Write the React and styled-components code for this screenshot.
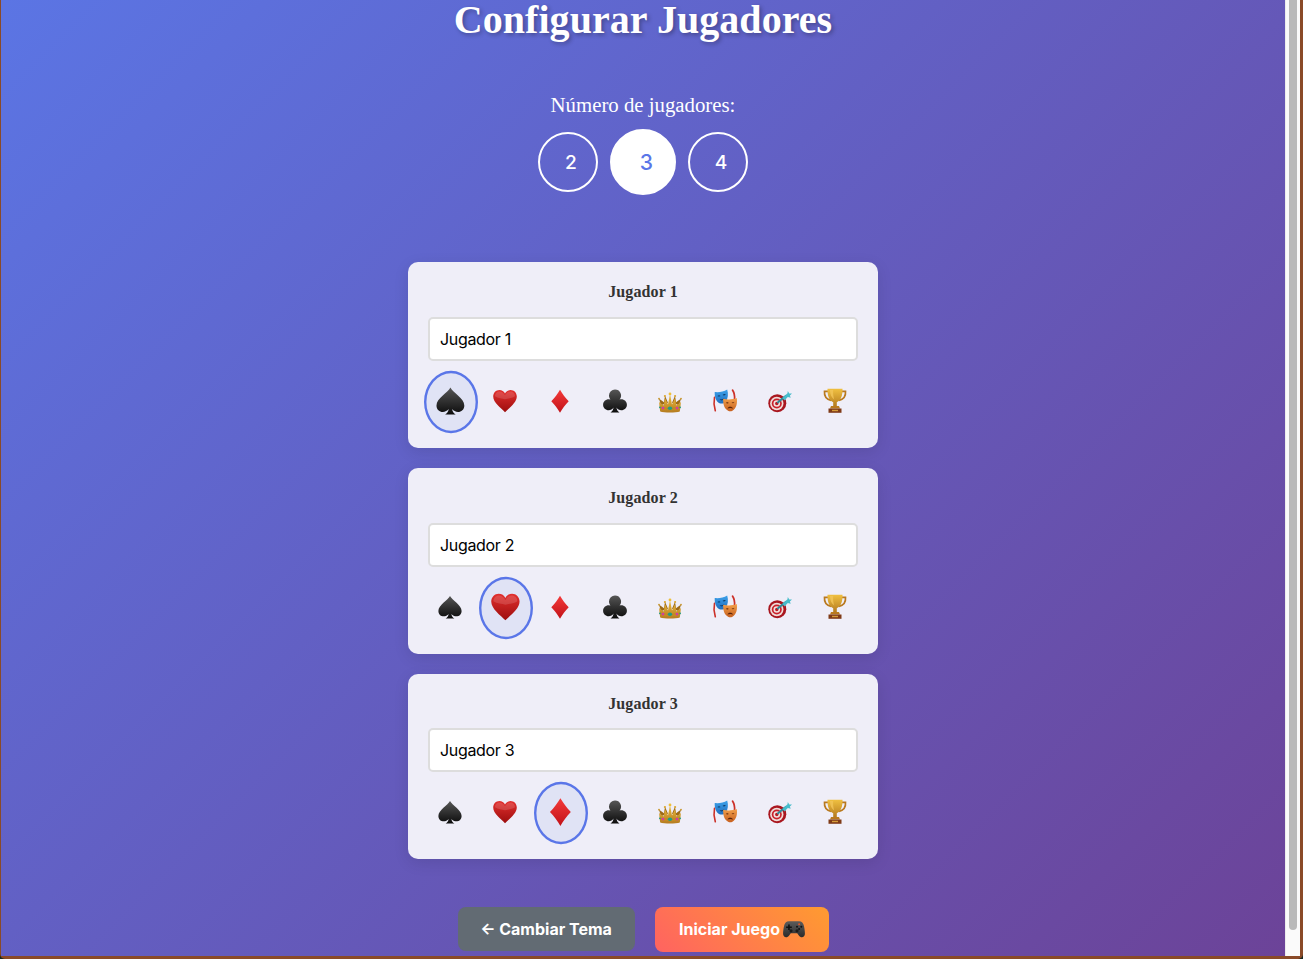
import React from "react";
import styled, { createGlobalStyle } from "styled-components";

const Global = createGlobalStyle`
  html, body { margin: 0; padding: 0; height: 100%; overflow: hidden; background: #16261f; }
  #root { height: 100%; }
  * { box-sizing: border-box; }
`;

const Frame = styled.div`
  width: 1303px; height: 959px; display: flex; border-radius: 0 0 5px 5px;
  padding: 0 3px 3px 1px; background: #8a4a28; overflow: hidden;
`;
const Page = styled.main`
  flex: 1; min-width: 0; display: flex; flex-direction: column; align-items: center;
  background: linear-gradient(135deg, #5b75e4 0%, #6c4398 100%);
  font-family: "Liberation Serif", "Times New Roman", serif; color: #fff;
`;
const Scrollbar = styled.div`
  width: 15px; flex: none; background: #fafafa; border-left: 1px solid #ececec; padding: 0 3px;
`;
const Thumb = styled.div`
  height: 930px; background: #b9b9b9; border-radius: 0 0 5px 5px;
`;
const Title = styled.h1`
  margin: 0; height: 40px; line-height: 40px; font-size: 40px; font-weight: 700; letter-spacing: .05px;
  text-shadow: 2px 2px 4px rgba(0,0,0,.3);
`;
const Label = styled.p`
  margin: 53px 0 0; height: 24px; line-height: 24px; font-size: 20.8px;
`;
const CountRow = styled.div`
  display: flex; gap: 15px; margin-top: 15px;
`;
const CountButton = styled.button`
  width: 60px; height: 60px; border-radius: 50%; border: 2px solid #fff; padding: 0 0 0 6px;
  background: ${p => p.$active ? "#fff" : "transparent"};
  color: ${p => p.$active ? "#5a76e8" : "#fff"};
  font-family: Inter, sans-serif; font-size: 19.2px; font-weight: 500;
  transform: ${p => p.$active ? "scale(1.1)" : "none"};
`;
const Cards = styled.div`
  display: flex; flex-direction: column; gap: 20px; margin-top: 70px; width: 470px;
`;
const Card = styled.section`
  height: 185.8px; padding: 20px; border-radius: 10px; background: #efeef8;
  box-shadow: 0 4px 15px rgba(0,0,0,.1);
`;
const CardTitle = styled.h3`
  margin: 0 0 15px; height: 19.75px; line-height: 20px; font-size: 16px; font-weight: 700; letter-spacing: .1px;
  text-align: center; color: #333;
`;
const NameInput = styled.input`
  display: block; width: 100%; height: 44px; padding: 0 10px; border: 2px solid #ddd; border-radius: 5px;
  background: #fff; color: #000; font-family: Inter, sans-serif; font-size: 16px; letter-spacing: -.32px; outline: none;
`;
const SymbolRow = styled.div`
  display: flex; gap: 10px; margin-top: 15px;
`;
const SymbolButton = styled.button`
  width: 45px; height: 52.05px; flex: none; padding: 0; display: flex; align-items: center; justify-content: center;
  border-radius: 50%; border: 2px solid ${p => p.$active ? "#5a76e8" : "transparent"};
  background: ${p => p.$active ? "#e0e3f5" : "transparent"};
  transform: ${p => p.$active ? "translateX(.5px) scale(1.2)" : "none"};
`;
const Actions = styled.div`
  display: flex; gap: 20px; margin-top: 48px; align-items: flex-start;
`;
const BaseAction = styled.button`
  height: 44px; border: 0; border-radius: 8px; display: flex; align-items: center; justify-content: center; gap: 3px;
  color: #fff; font-family: Inter, sans-serif; font-size: 16px; font-weight: 700;
`;
const BackButton = styled(BaseAction)`
  width: 177px; background: #626b73;
`;
const StartButton = styled(BaseAction)`
  width: 174px; height: 45px; padding: 0 0 1px 1px; background: linear-gradient(45deg, #ff6361, #ff9b30);
`;
const Defs = styled.svg`
  position: absolute; width: 0; height: 0;
`;
const Icon = styled.svg`
  display: block; width: 24px; height: 24px; flex: none; overflow: visible; transform: translate(-1px, -.7px);
`;
const PadIcon = styled.svg`
  display: block; width: 22px; height: 22px; flex: none;
`;

const Spade = () => (
  <Icon viewBox="0 0 24 24">
    <path fill="url(#dark)" d="M12 .6C10 4.8 .4 9.6.4 15.6c0 3.6 2.600 5.400 5.200 5.400 2 0 3.800-.9 5-2.400-.3 2-1.300 3.600-3 4.600h8.800c-1.700-1-2.700-2.600-3-4.600 1.200 1.500 3 2.400 5 2.400 2.600 0 5.200-1.800 5.200-5.400C23.600 9.600 14 4.800 12 .6z" />
  </Icon>
);
const Heart = () => (
  <Icon viewBox="0 0 24 24">
    <path fill="url(#red)" d="M12 23C8 18.800.2 13.500.2 7.300.2 3.600 3 .8 6.400.8c2.500 0 4.600 1.300 5.600 3.500C13 2.100 15.100.8 17.600.8c3.400 0 6.200 2.800 6.200 6.500C23.800 13.500 16 18.800 12 23z" />
    <path fill="#fff" opacity=".14" d="M2 7c0-2.800 2.200-4.700 4.600-4.700 2.200 0 4.200 1.400 5.400 3.700 1.200-2.300 3.200-3.700 5.400-3.700C19.800 2.300 22 4.200 22 7c-3 2-7 2-10 3C9 9 5 9 2 7z" />
  </Icon>
);
const Diamond = () => (
  <Icon viewBox="0 0 24 24">
    <path fill="url(#brightRed)" d="M12 .4c2.400 4 5.200 8 8.700 11.500C17.200 15.400 14.400 19.500 12 23.500 9.600 19.500 6.800 15.400 3.300 11.900 6.800 8.400 9.600 4.400 12 .4z" />
  </Icon>
);
const Club = () => (
  <Icon viewBox="0 0 24 24">
    <path fill="url(#dark)" d="M12 .3a6 6 0 0 0-6 6c0 1.500.5 2.800 1.400 3.900a5.700 5.700 0 0 0-1.700-.3C2.600 9.900.1 12.300.1 15.400s2.500 5.500 5.600 5.500c2 0 3.800-1 4.800-2.700-.2 2.200-1.200 3.900-3 5h9c-1.800-1.100-2.800-2.800-3-5 1 1.700 2.800 2.700 4.800 2.700 3.100 0 5.600-2.400 5.600-5.500s-2.500-5.500-5.600-5.500c-.6 0-1.200.1-1.700.3A6 6 0 0 0 12 .3z" />
  </Icon>
);
const Crown = () => (
  <Icon viewBox="0 0 24 24">
    <path fill="#9c6a18" d="M3 16 .9 9.300 6 13l1-6.500 3 7zM21 16l2.100-6.700L18 13l-1-6.500-3 7z" />
    <path fill="url(#gold)" d="M2.200 22.300C1.700 19 1.300 16 1.100 12.800l4.600 3.400L7 9l3 6.200L12 4.600l2 10.600L17 9l1.300 7.200 4.600-3.400c-.2 3.200-.6 6.200-1.100 9.500C18 23.600 6 23.600 2.200 22.300z" />
    <path fill="#c48a22" d="M2 17.200c6 1.300 14 1.300 20 0l-.3 2.700c-6 1.200-13.400 1.200-19.400 0z" />
    <circle cx="12" cy="4.600" r="1.400" fill="#eec03a" /><circle cx="6.900" cy="6.700" r="1.100" fill="#dca72c" /><circle cx="17.100" cy="6.700" r="1.100" fill="#dca72c" />
    <circle cx="1" cy="9.400" r=".9" fill="#c8962a" /><circle cx="23" cy="9.400" r=".9" fill="#c8962a" />
    <circle cx="5" cy="18.800" r="1.400" fill="#cf3fa0" /><circle cx="19" cy="18.800" r="1.400" fill="#cf3fa0" /><ellipse cx="12" cy="19" rx="2.200" ry="1.700" fill="#1f9d84" />
    <circle cx="1.900" cy="18" r=".9" fill="#1f9d84" /><circle cx="22.100" cy="18" r=".9" fill="#1f9d84" />
  </Icon>
);
const Masks = () => (
  <Icon viewBox="0 0 24 24">
    <path fill="none" stroke="#cc3028" strokeWidth="1.600" strokeLinecap="round" d="M1.500 8c-.9 4.500-.6 9 .8 13.500" />
    <path fill="none" stroke="#cc3028" strokeWidth="1.700" strokeLinecap="round" d="M19.500.8c1.700 2.500 2.400 5.500 2 9.500" />
    <path fill="url(#blueMask)" d="M1.700 2.800C6 3.300 10.500 2.500 14.200.2c1.300 4.400.9 9-1.400 11.900-1.700 2.100-4.100 2.700-6.300 1.800C3 12.400 1.500 7.800 1.700 2.800z" />
    <path fill="#0e3f70" d="M4.400 6.700c1-1 2.400-1 3.100-.1-1 .8-2.200.8-3.100.1zM9.600 5.800c.7-1 2.100-1.400 3.100-.7-.7 1-1.900 1.300-3.100.7zM6.600 10c1.900.2 3.500-.2 4.600-1.400-.3 2.100-3.200 3.600-4.600 1.400z" />
    <path fill="url(#orangeMask)" d="M10.200 9.500c4 1.100 9.200 1 13.600-.7.7 5-.3 10.600-4.400 12.700-1.300.7-3 .7-4.300 0-3.800-2-5.200-6.800-4.900-12z" />
    <path fill="#5a2207" d="M12.800 13.500c1.100-.8 2.300-.7 3 .2-1.100.6-2.100.6-3-.2zM18.500 13.500c1-.8 2.300-.8 3 0-1.100.6-2.100.6-3 0zM14.500 19.200c.7-2.400 4.600-2.400 5.600 0-1.800-.8-3.800-.8-5.600 0z" />
  </Icon>
);
const Target = () => (
  <Icon viewBox="0 0 24 24">
    <circle cx="9.300" cy="13.900" r="9" fill="#a9161f" />
    <circle cx="8.800" cy="14.200" r="6.700" fill="#efdcd8" />
    <circle cx="8.800" cy="14.200" r="5" fill="#c9202b" />
    <circle cx="8.800" cy="14.200" r="3.300" fill="#f2e2df" />
    <circle cx="8.800" cy="14.200" r="1.700" fill="#b71c25" />
    <path stroke="#2f8a9a" strokeWidth="2" strokeLinecap="round" d="M10 13 18 6.500" />
    <path fill="#48bccb" d="M14.500 8.800 19.500 4l.3-2.400 1.500 2.500 2.700.2-2.100 1.900.8 2.300-2.900-.7-3.300 3.300z" />
  </Icon>
);
const Trophy = () => (
  <Icon viewBox="0 0 24 24">
    <path fill="none" stroke="#b9791f" strokeWidth="1.700" d="M5.500 2H1.500c-.4 4.500 2.200 8 6.500 9M18.500 2h4c.4 4.500-2.200 8-6.500 9" />
    <path fill="url(#gold)" d="M4.500 -.5h15c.2 6-1.200 11.500-5.700 13.500v3.800h-3.600V13C5.700 11 4.300 5.500 4.500 -.5z" />
    <path fill="#f2c65a" opacity=".8" d="M7 .8h3.200c-.3 3.500.1 6.500 1 9.500C8.500 8.500 7 5.100 7 .8z" />
    <path fill="#b97a1f" d="M8 16.800h8l1 2.400H7z" />
    <path fill="#7f3a17" d="M5.500 19.200h13V23.500h-13z" />
    <rect x="9" y="20.500" width="6" height="1.400" fill="#d59c3a" />
  </Icon>
);
const Gamepad = () => (
  <PadIcon viewBox="0 0 24 24">
    <path fill="url(#pad)" d="M6.500 3.500h11c3 0 4.700 2 5.300 5 .7 3.200 1.200 7 1.100 9-.1 2.200-1.500 3.500-3.200 3.500-1.500 0-2.500-.8-3.400-2l-1.800-2.500H8.500L6.700 19c-.9 1.200-1.900 2-3.400 2-1.700 0-3.100-1.300-3.200-3.500-.1-2 .4-5.800 1.100-9 .6-3 2.300-5 5.300-5z" />
    <path fill="#111" d="M5.600 7h1.800v2.200h2.200V11H7.400v2.200H5.600V11H3.400V9.200h2.200z" />
    <circle cx="17.600" cy="6.800" r="1.100" fill="#e2542a" /><circle cx="20" cy="9.500" r="1.100" fill="#111" /><circle cx="15.300" cy="9.500" r="1.100" fill="#111" /><circle cx="17.600" cy="12" r="1.100" fill="#111" />
    <circle cx="8.700" cy="14" r="1.700" fill="#1b1b1b" /><circle cx="15.300" cy="14" r="1.700" fill="#1b1b1b" />
  </PadIcon>
);

const symbols = [Spade, Heart, Diamond, Club, Crown, Masks, Target, Trophy];

const Player = ({ n }) => (
  <Card>
    <CardTitle>Jugador {n}</CardTitle>
    <NameInput defaultValue={`Jugador ${n}`} />
    <SymbolRow>
      {symbols.map((S, i) => (
        <SymbolButton key={i} $active={i === n - 1}><S /></SymbolButton>
      ))}
    </SymbolRow>
  </Card>
);

export default function App() {
  return (
    <Frame>
      <Global />
      <Defs aria-hidden="true">
        <defs>
          <linearGradient id="dark" x1="0" y1="0" x2="0" y2="1"><stop offset="0" stopColor="#565656" /><stop offset="1" stopColor="#0c0c0c" /></linearGradient>
          <linearGradient id="red" x1="0" y1="0" x2="0" y2="1"><stop offset="0" stopColor="#e2302f" /><stop offset="1" stopColor="#9c0d0d" /></linearGradient>
          <linearGradient id="brightRed" x1="0" y1="0" x2="0" y2="1"><stop offset="0" stopColor="#f43a3a" /><stop offset="1" stopColor="#c11218" /></linearGradient>
          <linearGradient id="gold" x1="0" y1="0" x2="0" y2="1"><stop offset="0" stopColor="#f0c040" /><stop offset="1" stopColor="#b57c20" /></linearGradient>
          <linearGradient id="blueMask" x1="0" y1="0" x2="0" y2="1"><stop offset="0" stopColor="#3da2ea" /><stop offset="1" stopColor="#1f6ec0" /></linearGradient>
          <linearGradient id="orangeMask" x1="0" y1="0" x2="0" y2="1"><stop offset="0" stopColor="#f2a04a" /><stop offset="1" stopColor="#c7601f" /></linearGradient>
          <linearGradient id="pad" x1="0" y1="0" x2="0" y2="1"><stop offset="0" stopColor="#5c5c5c" /><stop offset="1" stopColor="#2b2b2b" /></linearGradient>
        </defs>
      </Defs>
      <Page>
        <Title>Configurar Jugadores</Title>
        <Label>Número de jugadores:</Label>
        <CountRow>
          {[2, 3, 4].map(c => <CountButton key={c} $active={c === 3}>{c}</CountButton>)}
        </CountRow>
        <Cards>
          {[1, 2, 3].map(n => <Player key={n} n={n} />)}
        </Cards>
        <Actions>
          <BackButton>← Cambiar Tema</BackButton>
          <StartButton>Iniciar Juego <Gamepad /></StartButton>
        </Actions>
      </Page>
      <Scrollbar><Thumb /></Scrollbar>
    </Frame>
  );
}
